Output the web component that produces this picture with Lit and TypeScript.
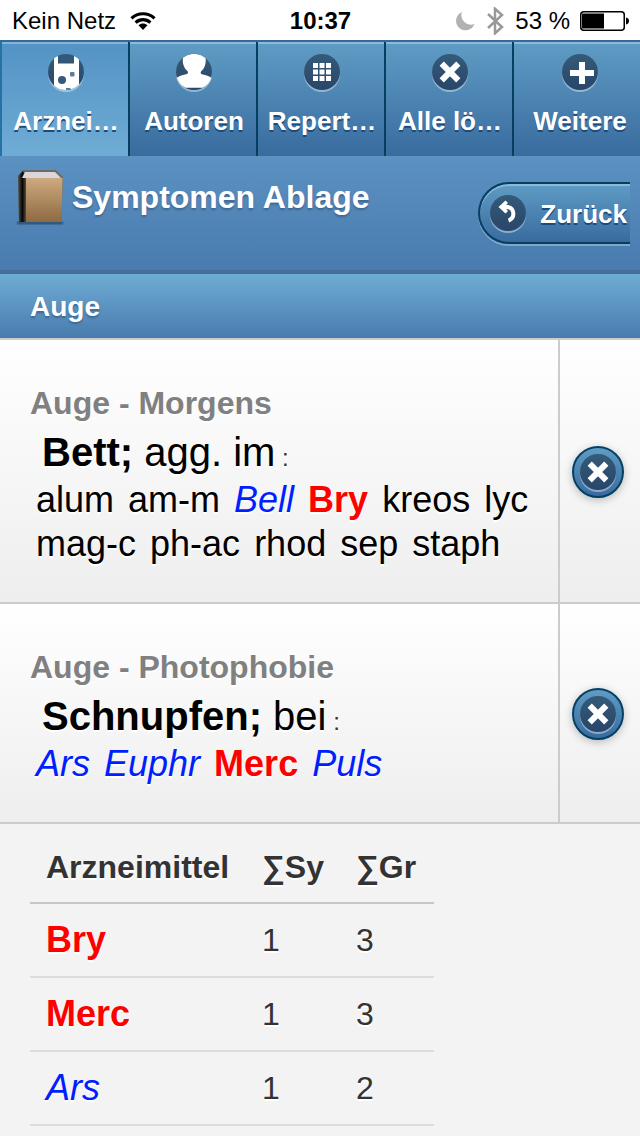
import { LitElement, html, css, svg, nothing } from "lit";
import { customElement } from "lit/decorators.js";
import { classMap } from "lit/directives/class-map.js";

type Grade = 1 | 2 | 3;
interface Remedy { name: string; grade: Grade }
interface Rubric { chapter: string; keyword: string; rest: string; remedies: Remedy[] }

const r = (name: string, grade: Grade = 1): Remedy => ({ name, grade });

const rubrics: Rubric[] = [
  {
    chapter: "Auge - Morgens", keyword: "Bett;", rest: "agg. im",
    remedies: [r("alum"), r("am-m"), r("Bell", 2), r("Bry", 3), r("kreos"), r("lyc"),
      r("mag-c"), r("ph-ac"), r("rhod"), r("sep"), r("staph")],
  },
  {
    chapter: "Auge - Photophobie", keyword: "Schnupfen;", rest: "bei",
    remedies: [r("Ars", 2), r("Euphr", 2), r("Merc", 3), r("Puls", 2)],
  },
];

const totals = [
  { remedy: r("Bry", 3), sy: 1, gr: 3 },
  { remedy: r("Merc", 3), sy: 1, gr: 3 },
  { remedy: r("Ars", 2), sy: 1, gr: 2 },
];

const glyphs = {
  device: svg`<path fill="#fff" d="M6 4.500V31.500A18 18 0 0 0 31 30.500V5.500A18 18 0 0 0 26 2V9.500H10V2A18 18 0 0 0 6 4.500Z"/>
    <circle cx="14" cy="26" r="4" fill="#35597b"/><rect x="22" y="18" width="4.500" height="4.500" rx="1" fill="#5d7d98"/>
    <rect x="18" y="34" width="4.500" height="2" fill="#5d7d98"/>`,
  user: svg`<path fill="#fff" d="M7 3.700A18 18 0 0 1 29.500 4C30.500 9 28.500 14.500 25.500 17C24 18.500 24.500 20 27 20.500C31 21.200 34 22.500 35.500 24A18 18 0 0 1 26.500 33.800H9.500A18 18 0 0 1 .800 24C2 22.500 5 21.200 9 20.500C12 20 12.500 18.700 11.500 17C8 14.500 6 9 7 3.700Z"/>`,
  grid: svg`<path fill="#fff" d="M9 9h5v5H9zM15.500 9h5v5h-5zM22 9h5v5h-5zM9 15.500h5v5H9zM15.500 15.500h5v5h-5zM22 15.500h5v5h-5zM9 22h5v5H9zM15.500 22h5v5h-5zM22 22h5v5h-5z"/>`,
  cross: svg`<path d="M9.700 9.700L26.300 26.300M26.300 9.700L9.700 26.300" stroke="#fff" stroke-width="6"/>`,
  plus: svg`<path d="M20 8v22M8 19h24" stroke="#fff" stroke-width="6"/>`,
  back: svg`<path d="M12 12H17.800A7 7 0 0 1 18.500 25.500" fill="none" stroke="#fff" stroke-width="4"/>
    <path d="M8.500 12L15.500 5.500L18 8L14.500 12L18 16L15.500 18.500Z" fill="#fff"/>`,
};
type Glyph = keyof typeof glyphs;

const disc = (name: Glyph) => html`<svg class="disc" viewBox="0 0 36 38" aria-hidden="true">
  <defs><linearGradient id="shade" x1="0" y1="0" x2="0" y2="1">
    <stop offset="0" stop-color="#355a78"/><stop offset="1" stop-color="#28466a"/></linearGradient></defs>
  <circle cx="18" cy="20" r="18" fill="#fff" fill-opacity=".4"/>
  <circle cx="18" cy="18" r="18" fill="url(#shade)"/>${glyphs[name]}</svg>`;

const remedyTpl = ({ name, grade }: Remedy) =>
  html`<span class=${classMap({ remedy: true, second: grade === 2, third: grade === 3 })}>${name}</span>`;

@customElement("app-root")
export class AppRoot extends LitElement {
  static styles = css`
    :host {
      display: block;
      min-height: 100vh;
      overflow-x: hidden;
      background: #f3f3f3;
      color: #333;
      font-family: "Liberation Sans", Arial, Helvetica, sans-serif;
    }
    * { box-sizing: border-box; }
    a { color: inherit; text-decoration: none; }
    button { font: inherit; cursor: pointer; }
    svg { display: block; flex: none; }

    .status {
      display: grid;
      grid-template-columns: 1fr auto 1fr;
      align-items: center;
      height: 40px;
      padding: 2px 11px 0 12px;
      background: #fff;
      color: #000;
      font-size: 24px;
    }
    .side { display: flex; align-items: center; gap: 14px; }
    .side.end { justify-content: flex-end; gap: 10px; }
    .clock { font-weight: bold; }

    .tabs {
      display: grid;
      grid-template-columns: repeat(5, 1fr);
      border-top: 2px solid #36699b;
    }
    .tab {
      display: flex;
      flex-direction: column;
      align-items: center;
      gap: 12px;
      height: 114px;
      padding: 12px 0 0 2px;
      border-left: 2px solid #044062;
      background: linear-gradient(#5f9cc5, #396b9e);
      box-shadow: inset 0 2px 0 rgba(255, 255, 255, .3);
      color: #fff;
      font-size: 26px;
      font-weight: bold;
      line-height: 34px;
      text-shadow: 0 2px 0 #194b7e;
      white-space: nowrap;
    }
    .tab.active {
      border-left-color: #2373a5;
      background: linear-gradient(#5393c5, #6facd5);
    }
    .tab:last-child { padding-left: 6px; }
    .disc { width: 36px; height: 38px; }

    .header {
      display: flex;
      align-items: flex-start;
      gap: 8px;
      height: 118px;
      padding: 12px 10px 0 16px;
      border-bottom: 4px solid #456f9a;
      background: linear-gradient(#5b92c2, #497bae);
      color: #fff;
    }
    .title {
      flex: 1;
      margin: 0;
      padding-top: 10px;
      font-size: 32px;
      line-height: 38px;
      text-shadow: 0 2px 2px #3e6790;
      white-space: nowrap;
    }
    .clip { overflow: hidden; padding: 14px 0 4px 4px; }
    .back {
      display: flex;
      align-items: center;
      gap: 14px;
      height: 62px;
      padding: 2px 3px 0 10px;
      border: 2px solid #044062;
      border-right: 0;
      border-radius: 31px 0 0 31px;
      background: linear-gradient(#5f9cc5, #396b9e);
      box-shadow: inset 0 2px 0 rgba(255, 255, 255, .3), 0 2px 0 rgba(255, 255, 255, .3);
      color: #fff;
      font-size: 26px;
      font-weight: bold;
      line-height: 34px;
      text-shadow: 0 2px 0 #194b7e;
    }

    .divider {
      margin: 0;
      height: 64px;
      padding: 2px 30px 0;
      background: linear-gradient(#6facd5, #497bae);
      color: #fff;
      font-size: 28px;
      line-height: 62px;
      text-shadow: 0 2px 2px #3e6790;
    }

    .list {
      margin: 0;
      padding: 0;
      list-style: none;
      border-top: 2px solid #ccc;
      text-shadow: 0 2px 0 #fff;
    }
    .row {
      display: flex;
      border-bottom: 2px solid #ccc;
      background: linear-gradient(#fff, #eee);
    }
    .entry {
      flex: 1;
      min-width: 0;
      padding: 40px 20px 36px 30px;
      color: #000;
    }
    .chapter {
      margin: 0;
      color: #808080;
      font-size: 32px;
      line-height: 46px;
    }
    .symptom {
      margin: 0;
      padding-left: 12px;
      font-size: 40px;
      line-height: 52px;
    }
    .colon { color: #333; font-size: 24px; line-height: 24px; }
    .remedies {
      margin: 0;
      padding-left: 6px;
      font-size: 36px;
      line-height: 44px;
    }
    .remedies .remedy { margin-right: 4px; }
    .second { color: #001eff; font-style: italic; }
    .third { color: #ff0000; font-weight: bold; }
    .action {
      display: flex;
      align-items: center;
      justify-content: center;
      width: 82px;
      padding: 2px 4px 0 0;
      border-left: 2px solid #ccc;
    }
    .remove {
      display: grid;
      place-items: center;
      width: 52px;
      height: 52px;
      padding: 2px 0 0;
      border: 2px solid #044062;
      border-radius: 50%;
      background: linear-gradient(#5f9cc5, #396b9e);
      box-shadow: 0 2px 8px rgba(0, 0, 0, .25);
    }

    .totals {
      width: 404px;
      max-width: calc(100% - 60px);
      margin: 0 30px;
      border-collapse: collapse;
      table-layout: fixed;
      font-size: 32px;
      text-align: left;
      text-shadow: 0 2px 0 #fff;
    }
    .totals th, .totals td { padding: 0 0 0 16px; }
    .totals th { height: 79px; padding-top: 8px; border-bottom: 2px solid #c6c6c6; }
    .totals td { height: 74px; border-bottom: 2px solid #dcdcdc; }
    .totals .remedy { font-size: 36px; }
    .name { width: 216px; }
    .sum { width: 94px; }
  `;

  private tab(label: string, glyph: Glyph, active = false) {
    return html`<a href="#" class=${classMap({ tab: true, active })}
      aria-current=${active ? "page" : nothing}>${disc(glyph)}<span>${label}</span></a>`;
  }

  private row(item: Rubric) {
    return html`<li class="row">
      <a class="entry" href="#">
        <h3 class="chapter">${item.chapter}</h3>
        <p class="symptom"><b>${item.keyword}</b> ${item.rest}<span class="colon"> :</span></p>
        <p class="remedies">${item.remedies.map((x) => html`${remedyTpl(x)} `)}</p>
      </a>
      <div class="action"><button class="remove" aria-label="Löschen">${disc("cross")}</button></div>
    </li>`;
  }

  render() {
    return html`
      <div class="status">
        <div class="side">
          <span>Kein Netz</span>
          <svg width="26" height="18" viewBox="0 0 26 18" aria-hidden="true">
            <path d="M1.500 6.300C8 .200 18 .200 24.500 6.300M5.600 10.600C10 6.700 16 6.700 20.400 10.600" fill="none" stroke="#000" stroke-width="3.200"/>
            <path d="M8.500 13.300C11.200 11 14.800 11 17.500 13.300L13 18Z"/>
          </svg>
        </div>
        <span class="clock">10:37</span>
        <div class="side end">
          <svg width="20" height="20" viewBox="0 0 20 20" aria-hidden="true">
            <path d="M7 1A9.500 9.500 0 1 0 19.500 13A9.500 9.500 0 0 1 7 1Z" fill="#b2b2b2"/>
          </svg>
          <svg width="20" height="28" viewBox="0 0 20 28" aria-hidden="true">
            <path d="M3 7L17 20L10 26.300V1.700L17 8L3 21" fill="none" stroke="#999" stroke-width="2.500"/>
          </svg>
          <span>53 %</span>
          <svg width="49" height="20" viewBox="0 0 49 20" aria-hidden="true">
            <rect x=".750" y=".750" width="43.500" height="18.500" rx="3" fill="none" stroke="#000" stroke-width="1.500"/>
            <rect x="2" y="2.500" width="22" height="15"/>
            <path d="M46 6.500C50 7 50 13 46 13.500Z"/>
          </svg>
        </div>
      </div>
      <nav class="tabs">
        ${this.tab("Arznei…", "device", true)}
        ${this.tab("Autoren", "user")}
        ${this.tab("Repert…", "grid")}
        ${this.tab("Alle lö…", "cross")}
        ${this.tab("Weitere", "plus")}
      </nav>
      <header class="header">
        <svg width="48" height="58" viewBox="0 0 48 58" aria-hidden="true">
          <defs>
            <linearGradient id="cover" x1="0" y1="0" x2="0" y2="1">
              <stop offset="0" stop-color="#cfaa80"/><stop offset="1" stop-color="#8d6a42"/>
            </linearGradient>
            <linearGradient id="spine" x1="0" y1="0" x2="1" y2="0">
              <stop offset="0" stop-color="#555"/><stop offset=".550" stop-color="#050505"/><stop offset="1" stop-color="#5a4b3a"/>
            </linearGradient>
            <filter id="soft"><feGaussianBlur stdDeviation="1"/></filter>
          </defs>
          <path d="M1 54h46v2H1z" fill="#1f3b58" filter="url(#soft)"/>
          <path d="M2 8L7 2H40L47 9L45.500 54H3Z" fill="#6f6a66"/>
          <path d="M2 8L7 3L10 9V54H3Z" fill="url(#spine)"/>
          <path d="M9 4H39L45 10H6Z" fill="#d8d8dc"/>
          <path d="M10 10H46.500L45.500 54H10Z" fill="url(#cover)"/>
        </svg>
        <h1 class="title">Symptomen Ablage</h1>
        <div class="clip"><button class="back">${disc("back")}<span>Zurück</span></button></div>
      </header>
      <main>
        <h2 class="divider">Auge</h2>
        <ul class="list">${rubrics.map((x) => this.row(x))}</ul>
        <table class="totals">
          <thead><tr><th class="name" scope="col">Arzneimittel</th><th class="sum" scope="col">∑Sy</th><th class="sum" scope="col">∑Gr</th></tr></thead>
          <tbody>${totals.map((t) => html`<tr><td>${remedyTpl(t.remedy)}</td><td>${t.sy}</td><td>${t.gr}</td></tr>`)}</tbody>
        </table>
      </main>`;
  }
}
